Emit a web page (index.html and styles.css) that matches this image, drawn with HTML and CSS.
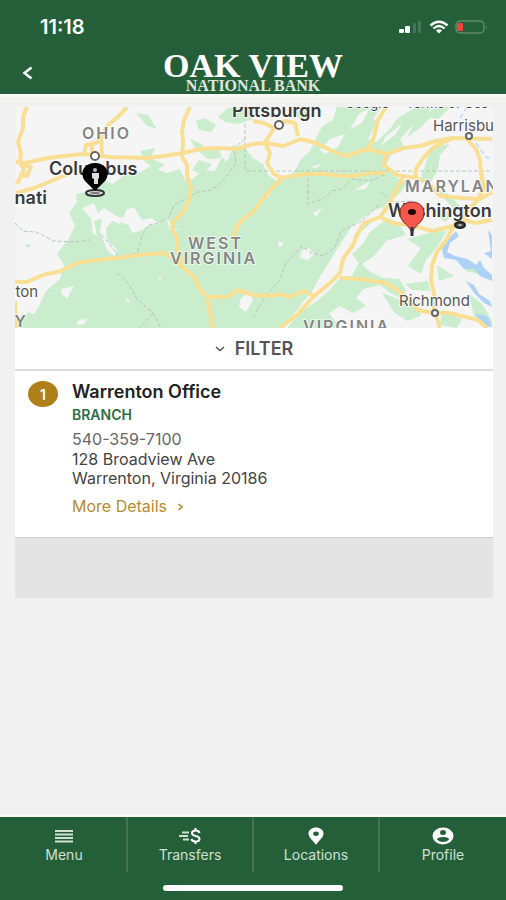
FILE: index.html
```
<!DOCTYPE html>
<html lang="en">
<head>
    <meta charset="UTF-8">
    <meta name="viewport" content="width=device-width, initial-scale=1.0">
    <title>Locations - Oak View National Bank</title>
    <link rel="stylesheet" href="styles.css">
</head>
<body>
    <header class="header">
        <div class="status-bar">
            <span class="time">11:18</span>
            <div class="status-icons">
                <svg width="24" height="14" viewBox="0 0 24 14">
                    <rect x="0" y="9" width="5" height="4" rx="1" fill="#fff"/>
                    <rect x="6" y="6" width="5" height="7" rx="1" fill="#fff"/>
                    <rect x="14" y="3" width="3" height="10" rx="1" fill="#467857"/>
                    <rect x="19" y="1" width="3" height="12" rx="1" fill="#467857"/>
                </svg>
                <svg width="20" height="14" viewBox="0 0 20 14">
                    <path d="M1.500 5.500Q10-2 18.500 5.500" fill="none" stroke="#fff" stroke-width="2.500"/>
                    <path d="M4.500 8.500Q10 3.500 15.500 8.500" fill="none" stroke="#fff" stroke-width="2.200"/>
                    <path d="M7 10.500Q10 8 13 10.500L10 13.500Z" fill="#fff"/>
                </svg>
                <svg width="33" height="14" viewBox="0 0 33 14">
                    <rect x="1" y="1" width="28" height="12" rx="4" fill="none" stroke="#5f8a6b" stroke-width="1.500"/>
                    <rect x="2" y="3" width="6" height="8" rx="1.500" fill="#f0433a"/>
                    <path d="M31 5q2 2 0 4z" fill="#5f8a6b"/>
                </svg>
            </div>
        </div>
        <div class="title-bar">
            <button class="back" aria-label="Back">
                <svg width="12" height="14" viewBox="0 0 12 14"><path d="M9.500 1.500L2.500 7L9.500 12.500" fill="none" stroke="#fff" stroke-width="2.500"/></svg>
            </button>
            <div class="logo">
                <span class="logo-name">OAK VIEW</span>
                <span class="logo-sub">NATIONAL BANK</span>
            </div>
        </div>
    </header>

    <main class="content">
        <svg class="map" viewBox="15 107 478 221">
            <rect x="15" y="107" width="478" height="221" fill="#f5f5f5"/>

            <!-- forest -->
            <g fill="#c9edcd">
                <path d="M25 328L38 308L46 291L60 279L64 265L57 254L68 240L75 226L69 213L77 202L76 194L91 191L102 180L113 184L125 174L141 172L151 166L166 173L180 169L185 180L193 179L203 170L215 171L220 160L231 153L233 145L245 148L253 158L263 164L268 175L280 183L295 171L301 159L310 151L316 138L322 127L333 119L337 107L382 107L373 118L377 122L368 139L376 142L389 130L398 118L416 107L431 107L427 116L412 126L400 139L405 148L392 153L386 165L394 176L407 183L400 193L386 204L379 216L363 230L351 240L342 259L325 283L306 301L280 328Z"/>
                <path d="M136 113L148 115L157 129L147 126Z"/>
                <path d="M196 121L205 118L216 125L211 132L199 130Z"/>
                <path d="M218 117L228 108L253 107L253 119L238 124L225 122Z"/>
                <path d="M190 139L202 144L207 151L218 147L222 158L208 159L196 149Z"/>
                <path d="M140 151L155 148L151 158L165 165L156 170L145 162Z"/>
                <path d="M199 160L212 164L202 175L192 170Z"/>
                <path d="M288 107L303 107L311 115L303 121L294 114Z"/>
                <path d="M436 107L451 107L438 119L430 118L420 128L407 137L414 124Z"/>
                <path d="M431 148L450 144L440 155L438 169L431 182L421 178L427 160Z"/>
                <path d="M388 218L397 222L406 235L386 241L374 256L362 264L369 271L383 278L399 279L406 290L402 299L389 292L380 285L363 289L356 298L366 306L353 313L340 306L329 313L335 321L345 328L287 328L302 311L317 301L329 291L340 278L352 276L359 263L352 254L363 244L370 232Z"/>
                <path d="M382 293L398 299L417 306L421 316L407 321L394 312Z"/>
                <path d="M432 232L447 231L436 249L426 260L421 274L408 266L421 248L407 239Z"/>
                <path d="M437 265L454 276L439 281Z"/>
                <path d="M405 284L428 281L430 291L412 290Z"/>
                <path d="M467 264L481 270L479 274L465 271Z"/>
                <path d="M442 310L462 319L457 328L440 325Z"/>
                <path d="M469 294L482 304L492 321L492 328L474 316Z"/>
                <path d="M442 209L452 216L445 222L436 215Z"/>
                <path d="M24 245L31 244L29 248Z"/>
                <path d="M16 319L29 312L36 315L27 328L15 328Z"/>
                <path d="M435 189L448 194L461 207L454 209Z"/>
            </g>

            <!-- clearings and valleys inside the forest -->
            <g fill="#f5f5f5">
                <path d="M82 208L94 203L98 213L104 208L120 218L127 216L120 224L112 221L106 229L107 240L117 250L114 256L107 250L100 232L102 219L94 221L97 235L93 234L91 219Z"/>
                <path d="M126 210L134 207L142 220L151 218L160 224L150 225L140 231L132 233L129 225L122 223Z"/>
                <path d="M165 214L171 224L178 231L170 230Z"/>
                <path d="M61 289L74 286L70 293L67 299L62 294Z"/>
                <path d="M157 278L162 277L160 280Z"/>
                <path d="M125 299L130 300L128 303Z"/>
                <path d="M79 320L88 318L84 324L76 325Z"/>
                <path d="M241 298L251 291L253 300L246 312L239 307Z"/>
                <path d="M301 251L309 248L314 254L308 260L300 258Z"/>
                <path d="M319 278L331 259L341 243L352 226L372 211L383 207L382 214L368 220L355 234L348 249L342 265L328 284L307 302L298 308L313 290Z"/>
                <path d="M359 114L370 108L362 123L350 129Z"/>
                <path d="M320 150L330 139L345 134L338 147L325 154Z"/>
                <path d="M385 137L403 123L395 135L382 145Z"/>
                <path d="M265 192L272 191L268 198Z"/>
                <path d="M313 213L322 208L316 217Z"/>
                <path d="M355 190L370 181L366 189Z"/>
                <path d="M278 241L284 243L279 248Z"/>
                <path d="M326 121L334 113L332 121Z"/>
                <path d="M311 167L323 163L316 168Z"/>
                <path d="M223 154L231 156L225 162Z"/>
                <path d="M391 112L403 108L389 124Z"/>
            </g>

            <!-- Chesapeake Bay and Potomac -->
            <g fill="#acd2f7">
                <path d="M456 231L459 236L450 243L447 252L455 256L468 259L476 265L480 260L484 268L492 275L492 281L480 276L474 269L464 269L456 260L444 258L442 249L447 240Z"/>
                <path d="M466 281L474 285L479 294L490 301L492 307L484 303L474 293Z"/>
                <path d="M488 230L492 235L492 259L484 253L491 251Z"/>
                <path d="M475 313L488 317L492 326L484 328Z"/>
            </g>
            <path d="M467 107L459 120M476 143L486 157L492 159" fill="none" stroke="#c9e1f5" stroke-width="2" stroke-dasharray="5 3"/>

            <!-- state borders -->
            <g fill="none" stroke="#b9c4bd" stroke-width="1" stroke-dasharray="4 2">
                <path d="M245 124V171H492"/>
                <path d="M308 172V204L323 199L332 191L342 189L352 179L370 181L386 174M380 192L395 202L412 201"/>
                <path d="M245 139L234 148L236 163L224 180L212 190L198 192L187 198L174 205L169 217L158 223L148 225L142 236L137 253L119 257L111 246L100 233"/>
                <path d="M15 223L23 231L36 232L54 241L74 242L90 240"/>
                <path d="M117 273L128 283L137 299L153 313L161 328M153 313L139 328"/>
                <path d="M253 317L267 294L280 280L286 263L302 246L311 253L324 256L335 247L341 231L362 221L379 205"/>
            </g>

            <g class="roads">
                <path d="M27 107L23 117L23 128L18 142L21 153L20 162L24 170L17 184M15 328V301"/>
                <path d="M16 162L25 163L34 161L48 158L64 156L83 154L110 157L147 158L164 156L183 153L200 149L217 148L237 149L253 144L265 143L283 146L301 139L316 143L330 150L346 156L368 149L386 154L404 148L420 146L436 141L453 138L492 139"/>
                <path d="M127 107L119 116L108 125L101 136L96 143L86 145L84 155M101 136L102 155M92 143V156"/>
                <path d="M190 107L184 120L182 131L183 143L182 157L187 165L187 176L191 188L189 200L183 212L172 223L173 231L178 239L177 247L183 267"/>
                <path d="M16 193L34 188L49 182L63 176L76 170M20 164L31 167L27 176L19 175"/>
                <path d="M15 282L27 282L43 275L61 271L77 263L97 260L117 258L140 255L163 253L172 257L183 267L194 277L200 289L207 297L210 311L213 328"/>
                <path d="M207 297L227 297L238 290L253 295L273 296L280 294L290 297L303 291L313 295"/>
                <path d="M280 328L298 314L313 297L330 283L340 273L343 259L353 245L357 235L364 223L380 217L389 205L395 192L403 178"/>
                <path d="M380 217L392 223L410 225L433 231L453 226L461 219L475 223L492 220"/>
                <path d="M454 225L447 239L437 252L432 265L431 280L435 298L434 309L440 328"/>
                <path d="M340 278L360 279L386 283L397 290L406 297L418 310L433 313L449 313L466 317L478 320L487 328"/>
                <path d="M386 107L378 120L374 137L368 149"/>
                <path d="M386 154L384 165L397 175L416 178L428 183L440 196L461 198L480 199L492 192"/>
                <path d="M265 143L270 153L267 163L274 174L282 178L272 188L262 200L253 212L242 220L236 228L233 239"/>
                <path d="M280 178L306 174L325 174L342 176L353 176L372 173L386 173"/>
                <path d="M466 138L476 149L480 160L481 173L484 188L477 201L466 212L460 224"/>
                <path d="M453 138L434 147L423 158L416 169L415 178"/>
                <path d="M265 143L274 128L285 121L295 123L298 136M253 121L264 123L274 128"/>
            </g>

            <!-- places -->
            <g class="label-credit">
                <text x="345" y="108">Google</text>
                <text x="406" y="108">Terms of Use</text>
            </g>
            <g class="label-state">
                <text x="82" y="139">OHIO</text>
                <text x="188" y="249">WEST</text>
                <text x="170" y="264">VIRGINIA</text>
                <text x="405" y="192">MARYLAND</text>
                <text x="303" y="332">VIRGINIA</text>
                <text x="28" y="327" text-anchor="end">KENTUCKY</text>
            </g>
            <g class="label-city">
                <text x="232" y="117">Pittsburgh</text>
                <text x="49" y="175">Columbus</text>
                <text x="47" y="204" text-anchor="end">Cincinnati</text>
                <text x="388" y="217">Washington</text>
            </g>
            <g class="label-town">
                <text x="433" y="131">Harrisburg</text>
                <text x="399" y="306">Richmond</text>
                <text x="38" y="297" text-anchor="end">Lexington</text>
            </g>
            <g fill="#fff" stroke="#666" stroke-width="2">
                <circle cx="95" cy="156" r="4"/>
                <circle cx="279" cy="125" r="4"/>
                <circle cx="469" cy="136" r="3"/>
                <circle cx="435" cy="313" r="3"/>
            </g>
            <ellipse cx="460" cy="225" rx="5" ry="3" fill="#444" stroke="#222" stroke-width="2"/>
            <ellipse cx="460" cy="225" rx="2" ry="1" fill="#bbb"/>

            <!-- current position -->
            <ellipse cx="95" cy="193" rx="9" ry="3" fill="#ddd" stroke="#333" stroke-width="2"/>
            <ellipse cx="95" cy="193" rx="5" ry="1" fill="#777"/>
            <path d="M95 191L85 181Q80 174 84 168Q88 163 95 163Q102 163 106 168Q110 174 105 181Z" fill="#000"/>
            <ellipse cx="95" cy="170" rx="2" ry="2" fill="#bbb"/>
            <path d="M92 173h7v5l-1 1v5h-4v-5l-2-1z" fill="#ddd"/>

            <!-- branch pin -->
            <path d="M412 235C411 224 400 224 400 213C400 206 405 202 412 202C419 202 424 206 424 213C424 224 413 224 412 235Z" fill="#f4574c" stroke="#7b241e" stroke-width="1"/>
            <path d="M412 227V236" stroke="#333" stroke-width="3"/>
            <ellipse cx="412" cy="212" rx="4" ry="3" fill="#1d0807"/>
        </svg>

        <button class="filter">
            <svg width="10" height="6" viewBox="0 0 10 6"><path d="M1 1L5 4.500L9 1" fill="none" stroke="#555" stroke-width="1.600"/></svg>
            FILTER
        </button>

        <section class="location">
            <span class="number">1</span>
            <div class="details">
                <h2>Warrenton Office</h2>
                <p class="type">BRANCH</p>
                <p class="phone">540-359-7100</p>
                <p class="address">128 Broadview Ave<br>Warrenton, Virginia 20186</p>
                <a class="more" href="#details">More Details
                    <svg width="7" height="8" viewBox="0 0 7 8"><path d="M1.500 1L5 4L1.500 7" fill="none" stroke="#b58a30" stroke-width="1.600"/></svg>
                </a>
            </div>
        </section>
        <div class="list-end"></div>
    </main>

    <footer class="footer">
        <nav class="tabs">
            <a href="#menu">
                <svg width="20" height="18" viewBox="0 0 20 18"><path d="M1 4H19M1 7.500H19M1 11H19M1 14.500H19" stroke="#cfe0d3" stroke-width="2"/></svg>
                Menu
            </a>
            <a href="#transfers">
                <svg width="24" height="18" viewBox="0 0 24 18">
                    <path d="M4 5.500H11M1 9H10M5 12.500H11" stroke="#cfe0d3" stroke-width="2"/>
                    <path d="M21.500 6Q21 3.500 17.500 3.500Q14 3.500 14 6Q14 8.200 17.500 9Q21.500 9.800 21.500 12Q21.500 14.500 17.500 14.500Q14 14.500 13.500 12M17.500 1V4M17.500 14V17" fill="none" stroke="#fff" stroke-width="2"/>
                </svg>
                Transfers
            </a>
            <a href="#locations">
                <svg width="16" height="18" viewBox="0 0 16 18"><path fill-rule="evenodd" d="M8 18C6 14 .5 11 .5 6.500C.5 3 4 .5 8 .5S15.500 3 15.500 6.500C15.500 11 10 14 8 18ZM8 4.500A2.500 2 0 1 0 8 9A2.500 2 0 1 0 8 4.500Z" fill="#fff"/></svg>
                Locations
            </a>
            <a href="#profile">
                <svg width="22" height="18" viewBox="0 0 22 18">
                    <ellipse cx="11" cy="9" rx="10.500" ry="8.500" fill="#fff"/>
                    <ellipse cx="11" cy="5.500" rx="3" ry="2.500" fill="#255f3a"/>
                    <path d="M5 12.500Q5 10 11 10T17 12.500Q14.500 15 11 15T5 12.500Z" fill="#255f3a"/>
                </svg>
                Profile
            </a>
        </nav>
        <div class="home-bar"></div>
    </footer>
</body>
</html>
```

FILE: styles.css
```
* {
    box-sizing: border-box;
}

body {
    font-family: Inter, Roboto, sans-serif;
    background-color: #f1f1f1;
    color: #333;
    margin: 0;
    display: flex;
    flex-direction: column;
    min-height: 100vh;
}

h2,
p {
    margin: 0;
}

svg {
    display: block;
}

button {
    border: none;
    background: none;
    padding: 0;
    font-family: inherit;
    cursor: pointer;
}

.header {
    background-color: #255f3a;
    color: #fff;
    border-bottom: 3px solid #f8faf4;
}

.status-bar {
    display: flex;
    justify-content: space-between;
    align-items: center;
    padding: 15px 18px 0 40px;
    height: 38px;
}

.time {
    font-size: 20px;
    font-weight: 600;
}

.status-icons {
    display: flex;
    align-items: center;
    gap: 6px;
}

.title-bar {
    display: grid;
    grid-template-columns: 56px 1fr 56px;
    align-items: center;
    height: 56px;
    padding-top: 13px;
}

.back {
    display: flex;
    justify-content: center;
    align-items: center;
}

.logo {
    display: flex;
    flex-direction: column;
    align-items: center;
    font-family: "Liberation Serif", serif;
    font-weight: bold;
}

.logo-name {
    font-size: 34px;
    line-height: 26px;
}

.logo-sub {
    font-size: 16px;
    line-height: 14px;
    color: #dce8df;
}

.content {
    flex: 1;
    padding: 10px 13px 10px 15px;
}

.map {
    width: 100%;
    height: auto;
}

.roads {
    fill: none;
    stroke: #f9df94;
    stroke-width: 4;
    stroke-linejoin: round;
}

.map text {
    paint-order: stroke;
    stroke: #fff;
    stroke-width: 2px;
    stroke-opacity: 0.7;
}

.label-state {
    font-size: 16px;
    font-weight: 600;
    letter-spacing: 2px;
    fill: #858585;
}

.label-city {
    font-size: 18px;
    font-weight: 600;
    fill: #3a3a3a;
}

.label-town {
    font-size: 15px;
    fill: #555;
}

.label-credit {
    font-size: 13px;
    fill: #444;
}

.filter {
    display: flex;
    justify-content: center;
    align-items: center;
    gap: 10px;
    width: 100%;
    height: 43px;
    background-color: #fff;
    border-bottom: 2px solid #dcdcdc;
    color: #555;
    font-size: 18px;
    font-weight: 600;
}

.location {
    display: flex;
    gap: 14px;
    padding: 10px 13px 21px;
    background-color: #fff;
    border-bottom: 1px solid #ccc;
}

.number {
    display: flex;
    justify-content: center;
    align-items: center;
    width: 30px;
    height: 26px;
    border-radius: 50%;
    background-color: #b08018;
    color: #fff;
    font-size: 14px;
    font-weight: 600;
}

.details {
    flex: 1;
    font-size: 16px;
    line-height: 19px;
    color: #444;
}

.details h2 {
    font-size: 18px;
    font-weight: 600;
    line-height: 21px;
    color: #222;
}

.type {
    font-size: 14px;
    font-weight: 600;
    line-height: 26px;
    color: #2b6e46;
}

.phone {
    line-height: 22px;
    color: #666;
}

.more {
    display: flex;
    align-items: center;
    gap: 10px;
    padding-top: 9px;
    color: #b58a30;
    text-decoration: none;
}

.list-end {
    height: 60px;
    background-color: #e4e4e4;
}

.footer {
    background-color: #255f3a;
    border-top: 3px solid #f8faf4;
    padding-bottom: 9px;
}

.tabs {
    display: grid;
    grid-template-columns: repeat(4, 1fr);
    padding-left: 2px;
}

.tabs a {
    display: flex;
    flex-direction: column;
    align-items: center;
    gap: 2px;
    height: 55px;
    padding-top: 10px;
    border-right: 2px solid #427552;
    color: #cfe0d3;
    font-size: 14px;
    line-height: 16px;
    text-decoration: none;
}

.tabs a:last-child {
    border-right: none;
}

.home-bar {
    width: 180px;
    height: 6px;
    margin: 13px auto 0;
    border-radius: 3px;
    background-color: #fff;
}
```
